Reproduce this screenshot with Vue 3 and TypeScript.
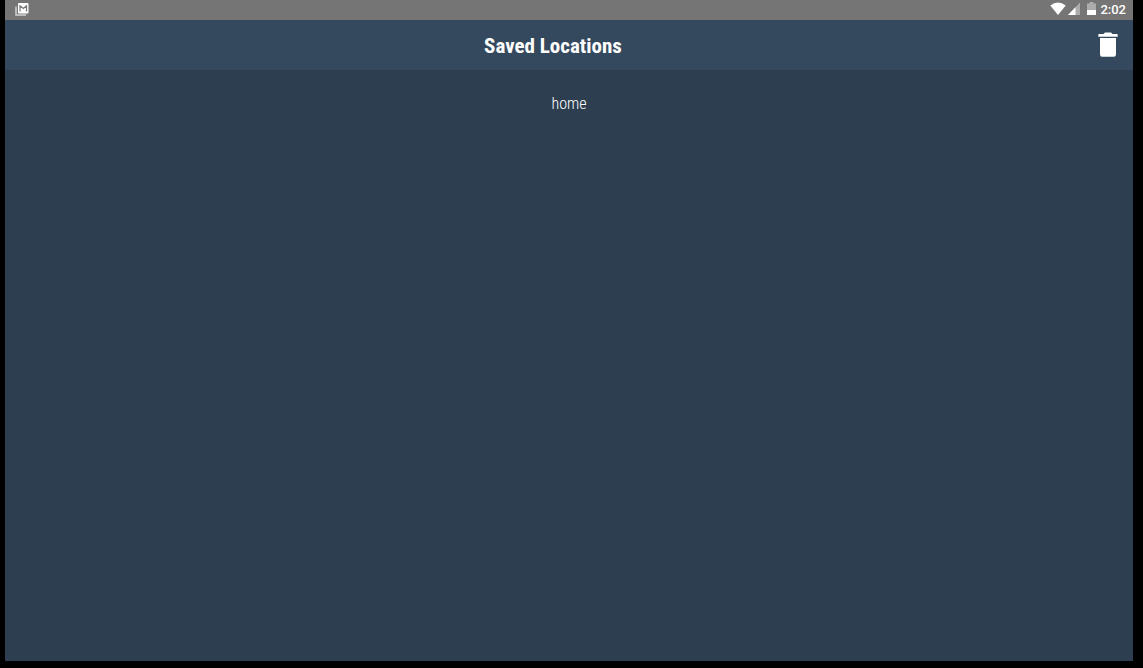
<script setup lang="ts">
import { ref } from 'vue'

const time = '2:02'
const locations = ref<string[]>(['home'])

function clearLocations(): void {
  locations.value = []
}
</script>

<template>
  <div class="device">
    <div class="status">
      <svg class="mail" width="14" height="14" viewBox="0 0 14 14" aria-hidden="true">
        <path d="M1 3.500v8.500h10" fill="none" stroke="#d2d2d2" stroke-width="1.500" />
        <rect x="3" y="0" width="10.500" height="10.500" rx="1" fill="#fff" />
        <path d="M5 8.500V2.800L8.300 5.500l3.200-2.700v5.700" fill="none" stroke="#777" stroke-width="1.200" />
      </svg>
      <div class="indicators">
        <svg width="16" height="14" viewBox="0 0 16 14" aria-hidden="true">
          <path d="M.3 3.500Q8-2.500 15.700 3.500L8 13z" fill="#fff" />
        </svg>
        <svg class="signal" width="12" height="14" viewBox="0 0 12 14" aria-hidden="true">
          <path d="M12 .5v12.500H0z" fill="#acacac" />
          <path d="M7.500 5.200V13H0z" fill="#fff" />
        </svg>
        <svg class="battery" width="9" height="14" viewBox="0 0 9 14" aria-hidden="true">
          <path d="M2.500 0h4v1.500H9V8H0V1.500h2.500z" fill="#acacac" />
          <path d="M0 8h9v5H0z" fill="#fff" />
        </svg>
        <span class="time">{{ time }}</span>
      </div>
    </div>
    <header class="bar">
      <h1>Saved Locations</h1>
      <button type="button" aria-label="Delete saved locations" @click="clearLocations">
        <svg width="20" height="26" viewBox="0 0 20 26" aria-hidden="true">
          <path d="M1 2h4.500L7 .5h6L14.500 2H19q.7 0 .7.700v2H.3v-2Q.3 2 1 2zM2 6h16v16.500q0 2.200-2.200 2.200H4.200Q2 24.700 2 22.500z" fill="#fff" />
        </svg>
      </button>
    </header>
    <main>
      <ul>
        <li v-for="location in locations" :key="location">
          <a href="#">{{ location }}</a>
        </li>
      </ul>
    </main>
  </div>
</template>

<style>
body {
  margin: 0;
  background: #000;
}
</style>

<style scoped>
.device {
  box-sizing: border-box;
  min-height: 100vh;
  padding: 0 10px 7px 5px;
  display: flex;
  flex-direction: column;
  background: #000;
  color: #fff;
  font-family: "Roboto Condensed", Roboto, sans-serif;
}
.status {
  height: 20px;
  padding: 0 7px 0 10px;
  display: flex;
  align-items: center;
  justify-content: space-between;
  background: #757575;
}
.status svg {
  display: block;
}
.indicators {
  display: flex;
  align-items: center;
}
.indicators svg {
  margin-bottom: 2px;
}
.signal {
  margin-left: 2px;
}
.battery {
  margin-left: 7px;
}
.time {
  margin-left: 4px;
  font: 500 13px/20px Roboto, sans-serif;
}
.bar {
  height: 50px;
  padding: 0 11px 0 7px;
  display: flex;
  align-items: center;
  background: #34495e;
}
h1 {
  flex: 1;
  margin: 0;
  padding-top: 2px;
  font-size: 21px;
  line-height: 30px;
  font-weight: 700;
  text-align: center;
}
button {
  width: 28px;
  height: 40px;
  padding: 0;
  border: 0;
  display: flex;
  align-items: center;
  justify-content: center;
  background: none;
  cursor: pointer;
}
main {
  flex: 1;
  background: #2c3e50;
}
ul {
  margin: 0;
  padding: 24px 0;
  list-style: none;
}
li {
  font-size: 16px;
  line-height: 20px;
  font-weight: 300;
  text-align: center;
}
a {
  color: #fff;
  text-decoration: none;
}
</style>
